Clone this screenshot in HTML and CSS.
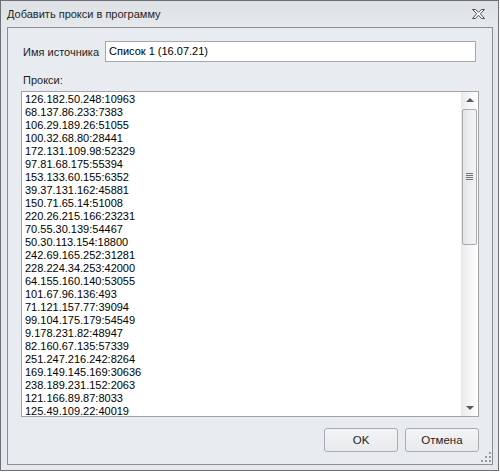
FILE: index.html
```html
<!DOCTYPE html>
<html lang="ru">
<head>
<meta charset="utf-8">
<title>Добавить прокси в программу</title>
<link rel="stylesheet" href="styles.css">
</head>
<body>
<div class="window">
  <div class="titlebar">
    <span class="title">Добавить прокси в программу</span>
    <svg class="close" width="13" height="10" viewBox="0 0 13 10">
      <polygon points="0.5,0.5 3.5,0.5 6.5,3.3 9.5,0.5 12.5,0.5 8.3,4.7 12.5,9.5 9.5,9.5 6.5,6.2 3.5,9.5 0.5,9.5 4.7,4.7" fill="#fff" stroke="#4a4d52" stroke-width="1" stroke-linejoin="miter"/>
    </svg>
  </div>
  <div class="panel">
    <div class="row">
      <label class="label name-label">Имя источника</label>
      <div class="input">Список 1 (16.07.21)</div>
    </div>
    <div class="label proxy-label">Прокси:</div>
    <div class="list">
      <div class="lines">
        <div>126.182.50.248:10963</div>
        <div>68.137.86.233:7383</div>
        <div>106.29.189.26:51055</div>
        <div>100.32.68.80:28441</div>
        <div>172.131.109.98:52329</div>
        <div>97.81.68.175:55394</div>
        <div>153.133.60.155:6352</div>
        <div>39.37.131.162:45881</div>
        <div>150.71.65.14:51008</div>
        <div>220.26.215.166:23231</div>
        <div>70.55.30.139:54467</div>
        <div>50.30.113.154:18800</div>
        <div>242.69.165.252:31281</div>
        <div>228.224.34.253:42000</div>
        <div>64.155.160.140:53055</div>
        <div>101.67.96.136:493</div>
        <div>71.121.157.77:39094</div>
        <div>99.104.175.179:54549</div>
        <div>9.178.231.82:48947</div>
        <div>82.160.67.135:57339</div>
        <div>251.247.216.242:8264</div>
        <div>169.149.145.169:30636</div>
        <div>238.189.231.152:2063</div>
        <div>121.166.89.87:8033</div>
        <div>125.49.109.22:40019</div>
      </div>
      <div class="scrollbar">
        <div class="arrow up"></div>
        <div class="thumb"><div class="grip"><i></i><i></i><i></i><i></i></div></div>
        <div class="track-rest"></div>
        <div class="arrow down"></div>
      </div>
    </div>
    <div class="buttons">
      <button class="btn">OK</button>
      <button class="btn">Отмена</button>
    </div>
    <div class="sizegrip">
      <i class="d1"></i><i class="d2"></i><i class="d3"></i><i class="d4"></i><i class="d5"></i><i class="d6"></i>
    </div>
  </div>
</div>
</body>
</html>
```

FILE: styles.css
```css
* { box-sizing: border-box; }
html, body { margin: 0; padding: 0; }
body {
  background: #ffffff;
  font-family: "Liberation Sans", Arial, sans-serif;
  font-size: 11px;
  color: #1e1e1e;
}
.window {
  width: 499px;
  height: 471px;
  border: 1px solid #6c7076;
  background: #e4e7eb;
  display: flex;
  flex-direction: column;
}
.titlebar {
  height: 26px;
  flex: none;
  display: flex;
  align-items: center;
  justify-content: space-between;
  padding: 0 13px 1px 6px;
  background: linear-gradient(#dde0e4, #e6e9ec);
}
.title {
  font-size: 11px;
  color: #1f1f1f;
  white-space: nowrap;
}
.close { display: block; margin-top: 1px; }
.panel {
  position: relative;
  flex: 1;
  margin: 0 5px 5px 6px;
  border: 1px solid #8b8e93;
  background: #e8ebef;
  padding: 13px 0 0 13px;
  display: flex;
  flex-direction: column;
}
.row {
  display: flex;
  align-items: center;
  height: 21px;
}
.label {
  color: #1e1e1e;
  white-space: nowrap;
  font-size: 11px;
}
.name-label {
  width: 84px;
  padding-left: 2px;
  flex: none;
}
.input {
  width: 371px;
  height: 21px;
  border: 1px solid #a4a8ad;
  background: #fff;
  color: #000;
  padding: 2px 0 0 3px;
  line-height: 15px;
  font-size: 11px;
  white-space: nowrap;
}
.proxy-label {
  margin-top: 11px;
  padding-left: 2px;
  height: 14px;
  line-height: 14px;
}
.list {
  margin-top: 4px;
  width: 458px;
  height: 326px;
  border: 1px solid #a0a4a9;
  background: #fff;
  display: flex;
  overflow: hidden;
}
.lines {
  flex: 1;
  padding: 1px 0 0 3px;
  font-size: 11px;
  line-height: 13px;
  color: #000;
  overflow: hidden;
  white-space: nowrap;
}
.scrollbar {
  width: 17px;
  flex: none;
  display: flex;
  flex-direction: column;
  align-items: center;
  background: linear-gradient(to right, #e9e9ea 0%, #f4f4f5 45%, #ffffff 100%);
}
.arrow {
  width: 0;
  height: 0;
  border-left: 4.5px solid transparent;
  border-right: 4.5px solid transparent;
  flex: none;
}
.arrow.up {
  margin-top: 6px;
  border-bottom: 4px solid #56595e;
}
.arrow.down {
  margin-bottom: 6px;
  border-top: 4px solid #56595e;
}
.thumb {
  margin-top: 7px;
  width: 15px;
  height: 136px;
  border: 1px solid #a9acb0;
  border-radius: 2px;
  background: linear-gradient(to right, #e2e3e5, #eeeff0 50%, #f3f3f4);
  display: flex;
  align-items: center;
  justify-content: center;
  flex: none;
}
.grip {
  display: flex;
  flex-direction: column;
  gap: 1px;
  margin-top: -1px;
}
.grip i {
  display: block;
  width: 7px;
  height: 1px;
  background: #707378;
}
.track-rest { flex: 1; }
.buttons {
  display: flex;
  justify-content: flex-end;
  gap: 7px;
  width: 458px;
  margin-top: 11px;
}
.btn {
  width: 74px;
  height: 24px;
  border: 1px solid #a9acb1;
  border-radius: 3px;
  background: linear-gradient(#f3f4f6, #e8eaed);
  font-family: "Liberation Sans", Arial, sans-serif;
  font-size: 11.5px;
  color: #1e1e1e;
  padding: 0;
}
.sizegrip {
  position: absolute;
  right: 0;
  bottom: 0;
  width: 14px;
  height: 14px;
}
.sizegrip i {
  position: absolute;
  width: 2px;
  height: 2px;
  background: #979ba0;
}
.sizegrip .d1 { right: 1px; bottom: 10px; }
.sizegrip .d2 { right: 1px; bottom: 6px; }
.sizegrip .d3 { right: 5px; bottom: 6px; }
.sizegrip .d4 { right: 1px; bottom: 2px; }
.sizegrip .d5 { right: 5px; bottom: 2px; }
.sizegrip .d6 { right: 9px; bottom: 2px; }
```
